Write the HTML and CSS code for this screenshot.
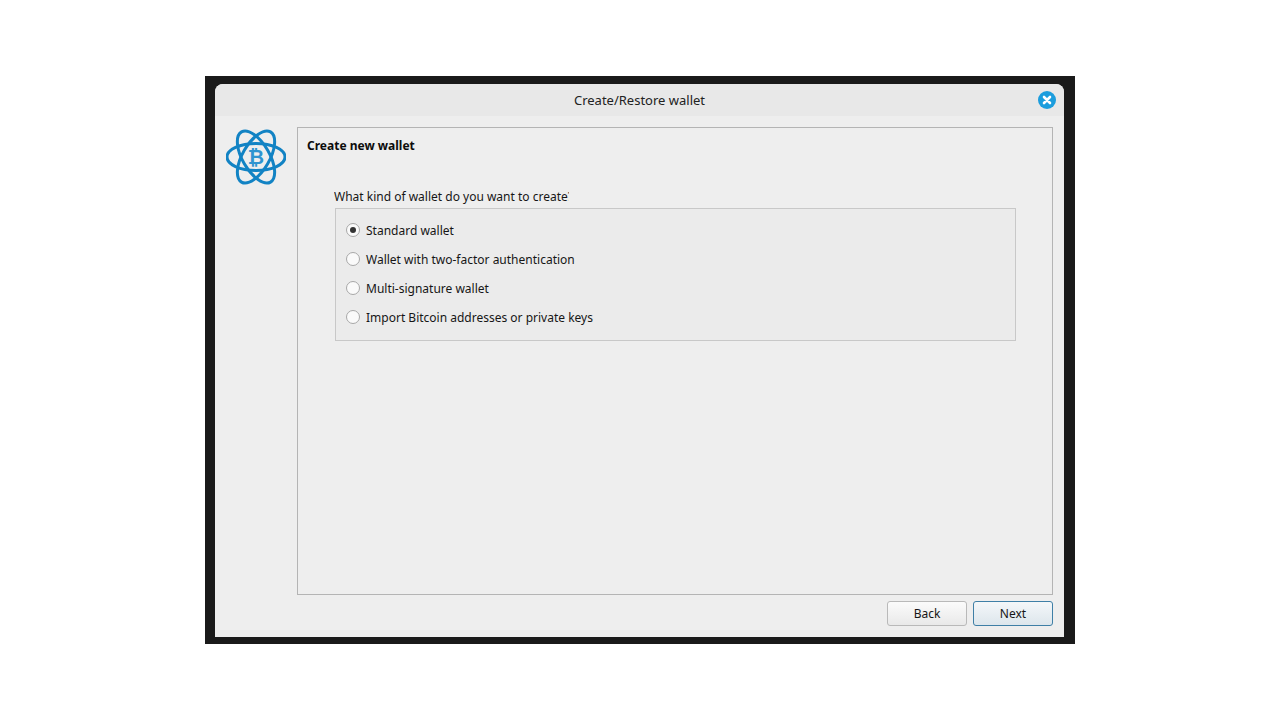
FILE: index.html
```html
<!DOCTYPE html>
<html lang="en">
<head>
<meta charset="utf-8">
<title>Create/Restore wallet</title>
<link rel="stylesheet" href="styles.css">
</head>
<body>
<div class="frame">
  <div class="window">
    <header class="titlebar">
      <span class="title">Create/Restore wallet</span>
      <button class="close" aria-label="Close">
        <svg viewBox="0 0 18 18" width="18" height="18"><circle cx="9" cy="9" r="9" fill="#1c9ddd"/><path d="M6 6l6 6M12 6l-6 6" stroke="#fff" stroke-width="2.6" stroke-linecap="round"/></svg>
      </button>
    </header>
    <div class="content">
      <aside class="sidebar">
        <svg class="logo" viewBox="0 0 60 56" width="60" height="56" fill="none" stroke="#1283c4" stroke-width="3">
          <ellipse cx="30" cy="28" rx="29" ry="13.5"/>
          <ellipse cx="30" cy="28" rx="29" ry="13.5" transform="rotate(60 30 28)"/>
          <ellipse cx="30" cy="28" rx="29" ry="13.5" transform="rotate(-60 30 28)"/>
          <text class="logo-b" x="30" y="35" text-anchor="middle">₿</text>
        </svg>
      </aside>
      <main class="main">
        <section class="panel">
          <h1 class="heading">Create new wallet</h1>
          <p class="question">What kind of wallet do you want to create?</p>
          <div class="group">
            <label class="option"><span class="radio checked"></span>Standard wallet</label>
            <label class="option"><span class="radio"></span>Wallet with two-factor authentication</label>
            <label class="option"><span class="radio"></span>Multi-signature wallet</label>
            <label class="option"><span class="radio"></span>Import Bitcoin addresses or private keys</label>
          </div>
        </section>
        <footer class="actions">
          <button class="btn">Back</button>
          <button class="btn primary">Next</button>
        </footer>
      </main>
    </div>
  </div>
</div>
</body>
</html>
```
FILE: styles.css
```css
* { box-sizing: border-box; }
html, body { height: 100%; }
body {
  margin: 0;
  background: #fff;
  display: flex;
  align-items: center;
  justify-content: center;
  font-family: "Noto Sans", sans-serif;
  font-size: 12px;
  color: #161616;
}
.frame {
  width: 870px;
  height: 568px;
  padding: 8px 11px 7px 10px;
  background: #1a1a1a;
}
.window {
  height: 100%;
  display: flex;
  flex-direction: column;
  background: #eeeeee;
  border-radius: 8px 8px 0 0;
  overflow: hidden;
}
.titlebar {
  height: 32px;
  flex: none;
  display: flex;
  align-items: center;
  justify-content: center;
  background: #e8e8e8;
  position: relative;
}
.title { font-size: 13px; color: #222; }
.close {
  position: absolute;
  right: 8px;
  top: 7px;
  width: 18px;
  height: 18px;
  padding: 0;
  border: 0;
  background: none;
  display: block;
}
.close svg { display: block; }
.content {
  flex: 1;
  display: flex;
  padding: 11px;
  min-height: 0;
}
.sidebar { width: 71px; flex: none; padding-top: 2px; }
.logo { display: block; }
.logo-b {
  font-family: "DejaVu Sans", sans-serif;
  font-weight: 700;
  font-size: 20px;
  fill: #2f94d0;
  stroke: none;
}
.main { flex: 1; display: flex; flex-direction: column; min-width: 0; }
.panel {
  height: 468px;
  flex: none;
  border: 1px solid #b4b4b4;
  padding: 9px 36px 0 9px;
}
.heading {
  margin: 0;
  font-size: 12px;
  font-weight: 700;
  line-height: 18px;
  color: #0c0c0c;
}
.question {
  margin: 33px 0 0 27px;
  width: 235px;
  height: 18px;
  line-height: 18px;
  white-space: nowrap;
  overflow: hidden;
}
.group {
  margin: 2px 0 0 28px;
  height: 133px;
  border: 1px solid #c8c8c8;
  background: #ebebeb;
  padding: 7px 10px 0;
  display: flex;
  flex-direction: column;
}
.option {
  height: 29px;
  flex: none;
  display: flex;
  align-items: center;
  gap: 6px;
}
.radio {
  width: 14px;
  height: 14px;
  flex: none;
  margin-top: -1px;
  border: 1px solid #a8a8a8;
  border-radius: 50%;
  background: #fafafa;
  display: flex;
  align-items: center;
  justify-content: center;
}
.radio.checked::after {
  content: "";
  width: 6px;
  height: 6px;
  border-radius: 50%;
  background: #333;
}
.actions {
  margin-top: 6px;
  display: flex;
  justify-content: flex-end;
  gap: 6px;
}
.btn {
  width: 80px;
  height: 25px;
  padding: 0;
  font: inherit;
  color: #161616;
  border: 1px solid #b9b9b9;
  border-radius: 3px;
  background: linear-gradient(#fbfbfb, #e9e9e9);
}
.primary {
  border-color: #3f7fa6;
  background: linear-gradient(#f4f7f9, #dde6ec);
}
```
